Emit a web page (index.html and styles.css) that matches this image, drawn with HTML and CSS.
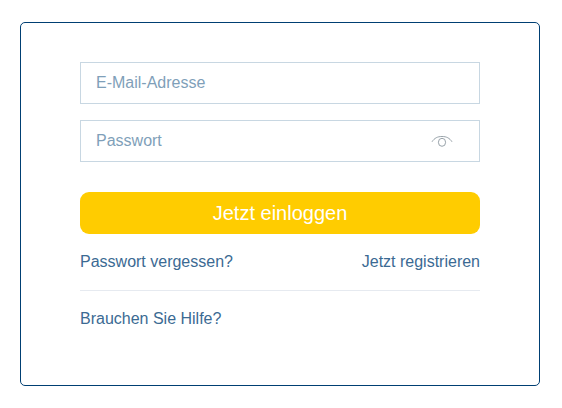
FILE: index.html
```html
<!DOCTYPE html>
<html lang="de">
<head>
  <meta charset="UTF-8">
  <meta name="viewport" content="width=device-width, initial-scale=1.0">
  <title>Login</title>
  <link rel="stylesheet" href="styles.css">
</head>
<body>

  <form class="login-box">
    <input class="field" type="email" placeholder="E-Mail-Adresse">
    <div class="field password">
      <input class="password-input" type="password" placeholder="Passwort">
      <svg class="eye" width="22" height="12" viewBox="0 0 22 12">
        <path d="M1 6.8 C3.5 3 6.5 1.5 11 1.5 S18.5 3 21 6.8"/>
        <ellipse cx="11" cy="7.3" rx="3.6" ry="4"/>
      </svg>
    </div>

    <button class="login-btn" type="submit">Jetzt einloggen</button>

    <div class="links">
      <a href="#">Passwort vergessen?</a>
      <a href="#">Jetzt registrieren</a>
    </div>
    <div class="help">
      <a href="#">Brauchen Sie Hilfe?</a>
    </div>
  </form>

</body>
</html>
```
FILE: styles.css
```css
* {
  margin: 0;
  padding: 0;
  box-sizing: border-box;
}

body {
  font-family: "Liberation Sans", Arial, sans-serif;
  font-size: 16px;
  background-color: #fff;
  padding: 22px 22px 22px 20px;
}

.login-box {
  width: 520px;
  height: 364px;
  padding: 39px 59px;
  border: 1px solid #003f73;
  border-radius: 5px;
}

.field {
  display: block;
  width: 100%;
  height: 42px;
  margin-bottom: 16px;
  padding: 0 15px;
  border: 1px solid #c8d7e2;
  font-family: inherit;
  font-size: 16px;
  outline: none;
}

.password {
  display: flex;
  align-items: center;
  padding-right: 26px;
  margin-bottom: 30px;
}

.password-input {
  flex: 1;
  min-width: 0;
  border: none;
  font-family: inherit;
  font-size: 16px;
  outline: none;
}

.field::placeholder,
.password-input::placeholder {
  color: #7f9fb9;
}

.eye {
  fill: none;
  stroke: #7f8c94;
  stroke-width: 0.8;
}

.login-btn {
  display: block;
  width: 100%;
  height: 42px;
  background-color: #fc0;
  color: #fff;
  border: none;
  border-radius: 9px;
  font-family: inherit;
  font-size: 20px;
  cursor: pointer;
}

.links {
  display: flex;
  justify-content: space-between;
  padding: 19px 0;
  line-height: 18px;
  border-bottom: 1px solid #e6eaf0;
}

.help {
  padding-top: 19px;
  line-height: 18px;
}

a {
  color: #3b6a93;
  text-decoration: none;
}
```
